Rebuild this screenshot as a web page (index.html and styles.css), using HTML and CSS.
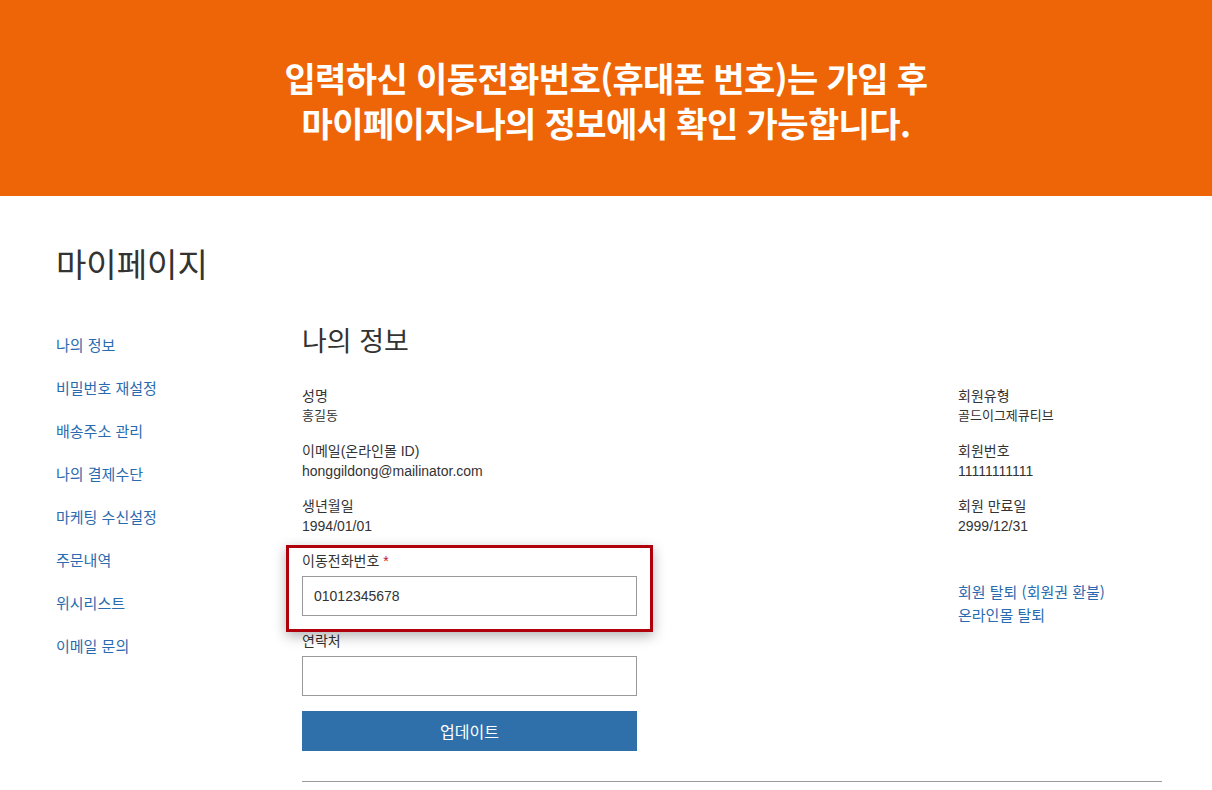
FILE: index.html
```html
<!DOCTYPE html>
<html lang="ko">
<head>
<meta charset="utf-8">
<title>마이페이지</title>
<link rel="stylesheet" href="styles.css">
</head>
<body>
<header class="banner">
  <p>입력하신 이동전화번호(휴대폰 번호)는 가입 후</p>
  <p>마이페이지&gt;나의 정보에서 확인 가능합니다.</p>
</header>
<main class="page">
  <h1 class="page-title">마이페이지</h1>
  <div class="layout">
    <nav class="side">
      <a href="#">나의 정보</a>
      <a href="#">비밀번호 재설정</a>
      <a href="#">배송주소 관리</a>
      <a href="#">나의 결제수단</a>
      <a href="#">마케팅 수신설정</a>
      <a href="#">주문내역</a>
      <a href="#">위시리스트</a>
      <a href="#">이메일 문의</a>
    </nav>
    <section class="content">
      <h2 class="section-title">나의 정보</h2>
      <div class="cols">
        <div class="col-left">
          <div class="field"><div class="label">성명</div><div class="value ko">홍길동</div></div>
          <div class="field"><div class="label">이메일(온라인몰 ID)</div><div class="value">honggildong@mailinator.com</div></div>
          <div class="field"><div class="label">생년월일</div><div class="value">1994/01/01</div></div>
          <div class="highlight">
            <div class="label">이동전화번호 <span class="req">*</span></div>
            <div class="input">01012345678</div>
          </div>
          <div class="label">연락처</div>
          <div class="input"></div>
          <button class="btn" type="button">업데이트</button>
        </div>
        <div class="col-right">
          <div class="field"><div class="label">회원유형</div><div class="value ko">골드이그제큐티브</div></div>
          <div class="field"><div class="label">회원번호</div><div class="value">11111111111</div></div>
          <div class="field"><div class="label">회원 만료일</div><div class="value">2999/12/31</div></div>
          <div class="links">
            <a href="#">회원 탈퇴 (회원권 환불)</a>
            <a href="#">온라인몰 탈퇴</a>
          </div>
        </div>
      </div>
      <hr class="rule">
    </section>
  </div>
</main>
</body>
</html>
```
FILE: styles.css
```css
* { box-sizing: border-box; }
html, body { margin: 0; padding: 0; background: #fff; }
body {
  font-family: "Liberation Sans", "Noto Sans CJK KR", sans-serif;
  color: #333;
}
.banner {
  height: 196px;
  background: #ee6508;
  color: #fff;
  display: flex;
  flex-direction: column;
  align-items: center;
  justify-content: center;
  padding-top: 4px;
}
.banner p {
  margin: 0;
  font-family: "Noto Sans CJK KR", sans-serif;
  font-weight: 700;
  font-size: 34px;
  line-height: 45px;
  letter-spacing: -0.6px;
}
.page { padding: 0 50px 0 56px; }
.page-title {
  margin: 47px 0 0;
  font-family: "Noto Sans CJK KR", sans-serif;
  font-weight: 400;
  font-size: 33px;
  line-height: 41px;
  color: #333;
}
.layout {
  display: grid;
  grid-template-columns: 246px 1fr;
  margin-top: 39px;
}
.side { display: flex; flex-direction: column; }
.side a {
  font-family: "Noto Sans CJK KR", sans-serif;
  font-size: 15px;
  line-height: 43px;
  height: 43px;
  color: #2a6bb0;
  text-decoration: none;
}
.section-title {
  margin: 0;
  font-family: "Noto Sans CJK KR", sans-serif;
  font-weight: 400;
  font-size: 27px;
  line-height: 34px;
  color: #333;
}
.cols {
  display: grid;
  grid-template-columns: 656px 1fr;
  margin-top: 29px;
}
.col-left { width: 335px; display: flex; flex-direction: column; }
.field { margin-bottom: 15px; }
.label {
  font-size: 14px;
  line-height: 20px;
  color: #333;
}
.value {
  font-size: 14px;
  line-height: 20px;
  color: #333;
}
.value.ko { font-size: 13px; }
.req { color: #c8102e; }
.highlight {
  margin: -6px -16px -1px;
  padding: 3px 13px 13px;
  border: 3px solid #b0000b;
  box-shadow: 0 4px 12px rgba(0,0,0,0.3);
  background: #fff;
  position: relative;
  z-index: 1;
}
.input {
  margin-top: 5px;
  height: 40px;
  border: 1px solid #999;
  padding: 0 11px;
  font-size: 14px;
  line-height: 38px;
  color: #333;
  background: #fff;
}
.btn {
  margin-top: 15px;
  height: 40px;
  border: 0;
  background: #2f70aa;
  color: #fff;
  font-family: "Noto Sans CJK KR", sans-serif;
  font-size: 16px;
  padding: 0;
}
.links { margin-top: 44px; display: flex; flex-direction: column; }
.links a {
  font-family: "Noto Sans CJK KR", sans-serif;
  font-size: 15px;
  line-height: 23px;
  color: #2a6bb0;
  text-decoration: none;
}
.rule {
  margin: 30px 0 0;
  border: 0;
  border-top: 1px solid #999;
  height: 0;
}
```
